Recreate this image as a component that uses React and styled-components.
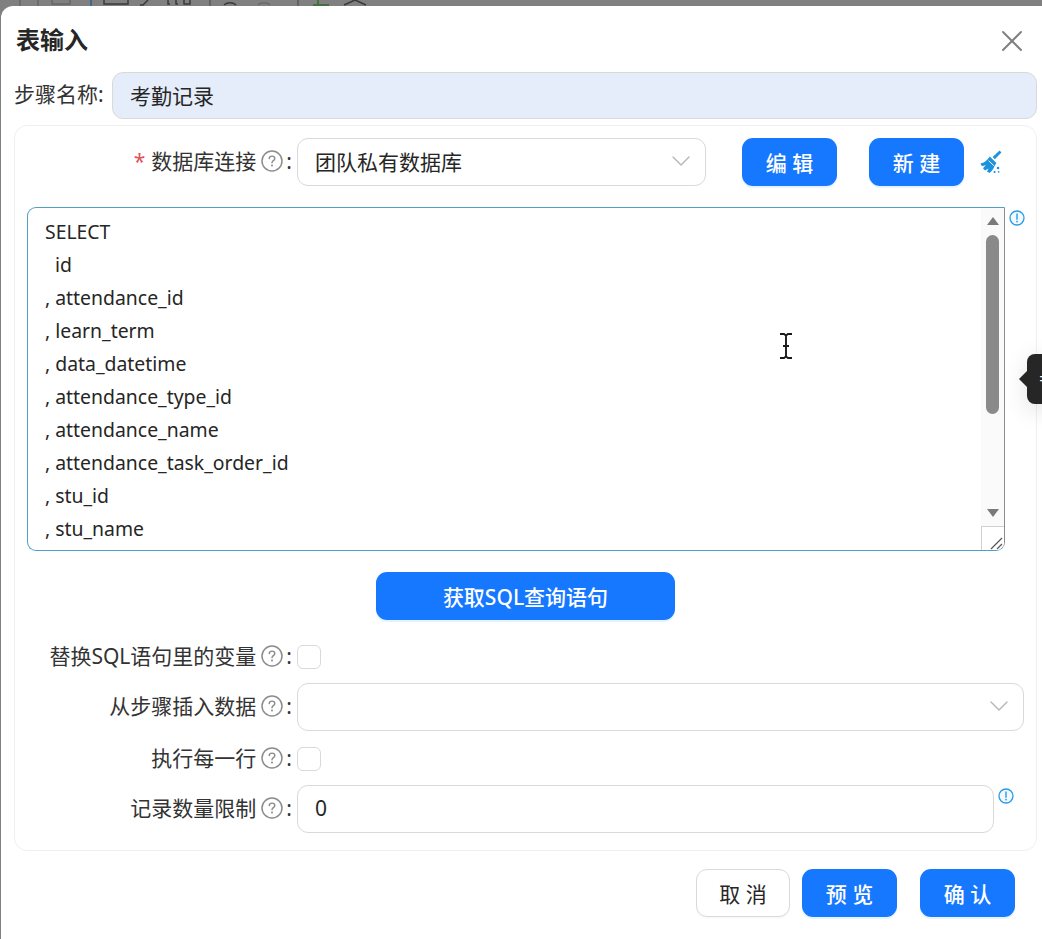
import React from "react";
import styled, { createGlobalStyle } from "styled-components";
import { ChevronDown, X } from "lucide-react";

const GlobalStyle = createGlobalStyle`
  html, body {
    margin: 0;
    padding: 0;
    height: 100%;
    background: #808080;
    overflow: hidden;
  }
  body {
    font-family: "Noto Sans", "Noto Sans CJK SC", sans-serif;
    color: #262626;
  }
`;

const Page = styled.div`
  width: 1042px;
  height: 939px;
  position: relative;
  overflow: hidden;
  background: #808080;
`;

const TopStrip = styled.div`
  height: 6px;
  overflow: hidden;
`;

const Modal = styled.div`
  height: 933px;
  box-sizing: border-box;
  margin-left: 1px;
  padding: 0 5px 0 13px;
  background: #fff;
  border-radius: 12px 0 0 0;
`;

const ModalHeader = styled.div`
  height: 66px;
  display: flex;
  align-items: center;
  justify-content: space-between;
  padding: 0 7px 2px 2px;
  box-sizing: border-box;
`;

const Title = styled.div`
  font-size: 24px;
  font-weight: 700;
  color: #262626;
`;

const CloseIcon = styled(X)`
  margin-top: 6px;
`;

const NameRow = styled.div`
  display: flex;
  align-items: center;
  height: 47px;
`;

const NameLabel = styled.label`
  flex: none;
  width: 98px;
  padding-bottom: 5px;
  font-size: 21px;
  color: #333;
  white-space: nowrap;
`;

const Field = styled.div`
  box-sizing: border-box;
  display: flex;
  align-items: center;
  justify-content: space-between;
  height: ${({ $height }) => $height || 48}px;
  width: ${({ $width }) => ($width ? `${$width}px` : "100%")};
  padding: 0 8px 2px 17px;
  font-size: 21px;
  color: #262626;
  background: ${({ $filled }) => ($filled ? "#e6edfa" : "#fff")};
  border: 1px solid #d9d9d9;
  border-radius: 11px;
`;

const Card = styled.div`
  box-sizing: border-box;
  height: 726px;
  margin-top: 6px;
  padding: 0 12px;
  border: 1px solid #f0f0f0;
  border-radius: 13px;
`;

const FormRow = styled.div`
  display: grid;
  grid-template-columns: 270px 1fr;
  align-items: center;
  margin-top: ${({ $top }) => $top}px;
`;

const RowLabel = styled.div`
  display: flex;
  align-items: center;
  justify-content: flex-end;
  height: 24px;
  margin-top: -3px;
  font-size: 21px;
  line-height: 24px;
  color: #333;
  white-space: nowrap;
  padding-right: 5px;
`;

const Required = styled.span`
  color: #e0525a;
  margin-right: 6px;
  font-size: 21px;
`;

const Help = styled.svg`
  width: 22px;
  height: 22px;
  margin: 0 3px 0 5px;
  flex: none;
`;

const Controls = styled.div`
  display: flex;
  align-items: center;
`;

const ActionButton = styled.button`
  box-sizing: border-box;
  width: ${({ $width }) => $width || 95}px;
  height: 48px;
  margin-left: ${({ $left }) => $left || 0}px;
  padding: 0;
  border: ${({ $plain }) => ($plain ? "1px solid #d9d9d9" : "none")};
  border-radius: 11px;
  background: ${({ $plain }) => ($plain ? "#fff" : "#1677ff")};
  color: ${({ $plain }) => ($plain ? "#262626" : "#fff")};
  font-family: inherit;
  font-size: 21px;
  font-weight: ${({ $plain }) => ($plain ? 400 : 500)};
  box-shadow: 0 2px 0 ${({ $plain }) => ($plain ? "rgba(0,0,0,0.02)" : "rgba(5,145,255,0.1)")};
`;

const BroomWrap = styled.span`
  display: flex;
  margin-left: 16px;
`;

const EditorRow = styled.div`
  display: flex;
  align-items: flex-start;
  margin-top: 21px;
`;

const Editor = styled.div`
  flex: none;
  box-sizing: border-box;
  width: 978px;
  height: 344px;
  display: flex;
  border: 1px solid #4f9fc6;
  border-right-color: #8c8c8c;
  border-radius: 9px 0 9px 9px;
  overflow: hidden;
`;

const Code = styled.div`
  flex: 1;
  padding: 7px 0 0 17px;
  font-size: 19.4px;
  line-height: 33px;
  color: #262626;
  white-space: pre;
  overflow: hidden;
`;

const Scroll = styled.div`
  width: 23px;
  display: flex;
  flex-direction: column;
  align-items: center;
  background: #fafafa;
`;

const ArrowUp = styled.div`
  margin-top: 9px;
  border: 6px solid transparent;
  border-top: 0;
  border-bottom: 8px solid #7a7a7a;
`;

const Thumb = styled.div`
  width: 13px;
  height: 179px;
  margin-top: 10px;
  background: #8a8a8a;
  border-radius: 7px;
`;

const ArrowDown = styled.div`
  margin-top: 95px;
  border: 6px solid transparent;
  border-bottom: 0;
  border-top: 8px solid #7a7a7a;
`;

const Resizer = styled.div`
  box-sizing: border-box;
  width: 100%;
  height: 24px;
  margin-top: auto;
  display: flex;
  align-items: flex-end;
  justify-content: flex-end;
  background: #fff;
  border-top: 1px solid #d0d0d0;
  border-left: 1px solid #d0d0d0;
`;

const InfoMark = styled.svg`
  width: 16px;
  height: 16px;
  margin: ${({ $margin }) => $margin};
  flex: none;
`;

const CenterRow = styled.div`
  display: flex;
  justify-content: center;
  margin-top: 21px;
`;

const CheckBox = styled.div`
  box-sizing: border-box;
  width: 24px;
  height: 24px;
  border: 1px solid #d9d9d9;
  border-radius: 6px;
  background: #fff;
`;

const Footer = styled.div`
  display: flex;
  justify-content: flex-end;
  margin-top: 18px;
  padding-right: 22px;
`;

const SideTab = styled.div`
  position: absolute;
  left: 1027px;
  top: 354px;
  width: 30px;
  height: 50px;
  border-radius: 8px;
  background: #262626;
  box-shadow: 0 6px 24px rgba(0, 0, 0, 0.12);
  color: #fff;
  font-size: 20px;
  line-height: 50px;
  padding-left: 12px;
  box-sizing: border-box;
  &::before {
    content: "";
    position: absolute;
    left: -8px;
    top: 17px;
    border: 8px solid transparent;
    border-left: 0;
    border-right-color: #262626;
  }
`;

const Cursor = styled.svg`
  position: absolute;
  left: 778px;
  top: 333px;
`;

const ToolIcons = styled.svg`
  display: block;
`;

const sqlLines = [
  "SELECT",
  "  id",
  ", attendance_id",
  ", learn_term",
  ", data_datetime",
  ", attendance_type_id",
  ", attendance_name",
  ", attendance_task_order_id",
  ", stu_id",
  ", stu_name",
];

const HelpIcon = () => (
  <Help viewBox="0 0 22 22">
    <circle cx="11" cy="11" r="10" fill="none" stroke="#8c8c8c" strokeWidth="1.5" />
    <path
      d="M8.2 8.6c.1-1.6 1.2-2.5 2.8-2.5 1.6 0 2.8.9 2.8 2.3 0 2.2-2.8 2.2-2.8 4.4"
      fill="none"
      stroke="#8c8c8c"
      strokeWidth="1.4"
      strokeLinecap="round"
    />
    <circle cx="11" cy="15.6" r="1" fill="#8c8c8c" />
  </Help>
);

const Info = ({ margin }) => (
  <InfoMark viewBox="0 0 16 16" $margin={margin}>
    <circle cx="8" cy="8" r="7" fill="#f2f9ff" stroke="#2a9ae6" strokeWidth="1.3" />
    <path d="M8 4v5.2" stroke="#2a9ae6" strokeWidth="1.4" strokeLinecap="round" />
    <circle cx="8" cy="11.6" r="0.9" fill="#2a9ae6" />
  </InfoMark>
);

const Broom = () => (
  <svg width="22" height="24" viewBox="0 0 22 24">
    <path d="M19.6.6L21.4 2.6 14.8 9.2 12.6 7z" fill="#1c93dc" />
    <path
      d="M9.8 6.4L16.4 13 14.8 15.6C13.8 18.6 11.8 21.2 9.6 23L7 21.6 8.6 18.4 5 20.6 3 18.2 5.8 15 2 16.2.4 13.4C4.2 12.8 7.4 10.2 9.8 6.4z"
      fill="#1c93dc"
    />
    <path d="M8.6 10.6L14 15.8" stroke="#fff" strokeWidth="0.9" />
    <circle cx="18" cy="18" r="1.3" fill="#1c93dc" />
    <circle cx="14.6" cy="22" r="1.1" fill="#1c93dc" />
    <circle cx="18.6" cy="21.8" r="0.9" fill="#1c93dc" />
  </svg>
);

const App = () => (
  <Page>
    <GlobalStyle />
    <TopStrip>
      <ToolIcons width="380" height="6" viewBox="0 0 380 6">
        <g fill="none" stroke="#3a3a3a" strokeWidth="1.5">
          <path d="M20 0v6M38 0v6" stroke="#666" />
          <path d="M52 0v4h18V0" stroke="#666" />
          <path d="M91 0v6" stroke="#2f5f8f" />
          <path d="M104 0v4h24V0M148 0l-5 5h-3M168 0v4h2M176 0v4h2M184 0v4h6V0" />
          <path d="M210 0v6" stroke="#5a5a5a" />
          <path d="M224 5c3-3 9-3 12 0" />
          <path d="M258 5c3-3 9-3 12 0" stroke="#6a6a6a" />
          <path d="M298 0v6" stroke="#5a5a5a" />
          <path d="M318 0v4M313 5h16" stroke="#2e6b2e" />
          <path d="M344 5l11-5 11 5" />
        </g>
      </ToolIcons>
    </TopStrip>
    <Modal>
      <ModalHeader>
        <Title>表输入</Title>
        <CloseIcon size={36} strokeWidth={1.3} color="#808080" />
      </ModalHeader>
      <NameRow>
        <NameLabel>步骤名称:</NameLabel>
        <Field $filled $height={47}>考勤记录</Field>
      </NameRow>
      <Card>
        <FormRow $top={12}>
          <RowLabel>
            <Required>*</Required>数据库连接
            <HelpIcon />:
          </RowLabel>
          <Controls>
            <Field $width={409}>
              团队私有数据库
              <ChevronDown size={32} strokeWidth={1} color="#b5b5b5" />
            </Field>
            <ActionButton $left={36}>编 辑</ActionButton>
            <ActionButton $left={32}>新 建</ActionButton>
            <BroomWrap>
              <Broom />
            </BroomWrap>
          </Controls>
        </FormRow>
        <EditorRow>
          <Editor>
            <Code>{sqlLines.join("\n")}</Code>
            <Scroll>
              <ArrowUp />
              <Thumb />
              <ArrowDown />
              <Resizer>
                <svg width="16" height="16" viewBox="0 0 16 16">
                  <path d="M3 15L14 4M9 15l5-5" stroke="#555" strokeWidth="1.2" />
                </svg>
              </Resizer>
            </Scroll>
          </Editor>
          <Info margin="3px 0 0 4px" />
        </EditorRow>
        <CenterRow>
          <ActionButton $width={299}>获取SQL查询语句</ActionButton>
        </CenterRow>
        <FormRow $top={25}>
          <RowLabel>
            替换SQL语句里的变量
            <HelpIcon />:
          </RowLabel>
          <Controls>
            <CheckBox />
          </Controls>
        </FormRow>
        <FormRow $top={14}>
          <RowLabel>
            从步骤插入数据
            <HelpIcon />:
          </RowLabel>
          <Field>
            <span />
            <ChevronDown size={32} strokeWidth={1} color="#b5b5b5" />
          </Field>
        </FormRow>
        <FormRow $top={16}>
          <RowLabel>
            执行每一行
            <HelpIcon />:
          </RowLabel>
          <Controls>
            <CheckBox />
          </Controls>
        </FormRow>
        <FormRow $top={14}>
          <RowLabel>
            记录数量限制
            <HelpIcon />:
          </RowLabel>
          <Controls>
            <Field $width={697}>0</Field>
            <Info margin="-26px 0 0 4px" />
          </Controls>
        </FormRow>
      </Card>
      <Footer>
        <ActionButton $plain $width={94}>取 消</ActionButton>
        <ActionButton $left={12}>预 览</ActionButton>
        <ActionButton $left={23}>确 认</ActionButton>
      </Footer>
    </Modal>
    <SideTab>=</SideTab>
    <Cursor width="16" height="26" viewBox="0 0 16 26">
      <path d="M2 1h4l2 1.5L10 1h4M8 2.5v21M2 25h4l2-1.5 2 1.5h4M5 13h6" fill="none" stroke="#1a1a1a" strokeWidth="1.9" />
    </Cursor>
  </Page>
);

export default App;
